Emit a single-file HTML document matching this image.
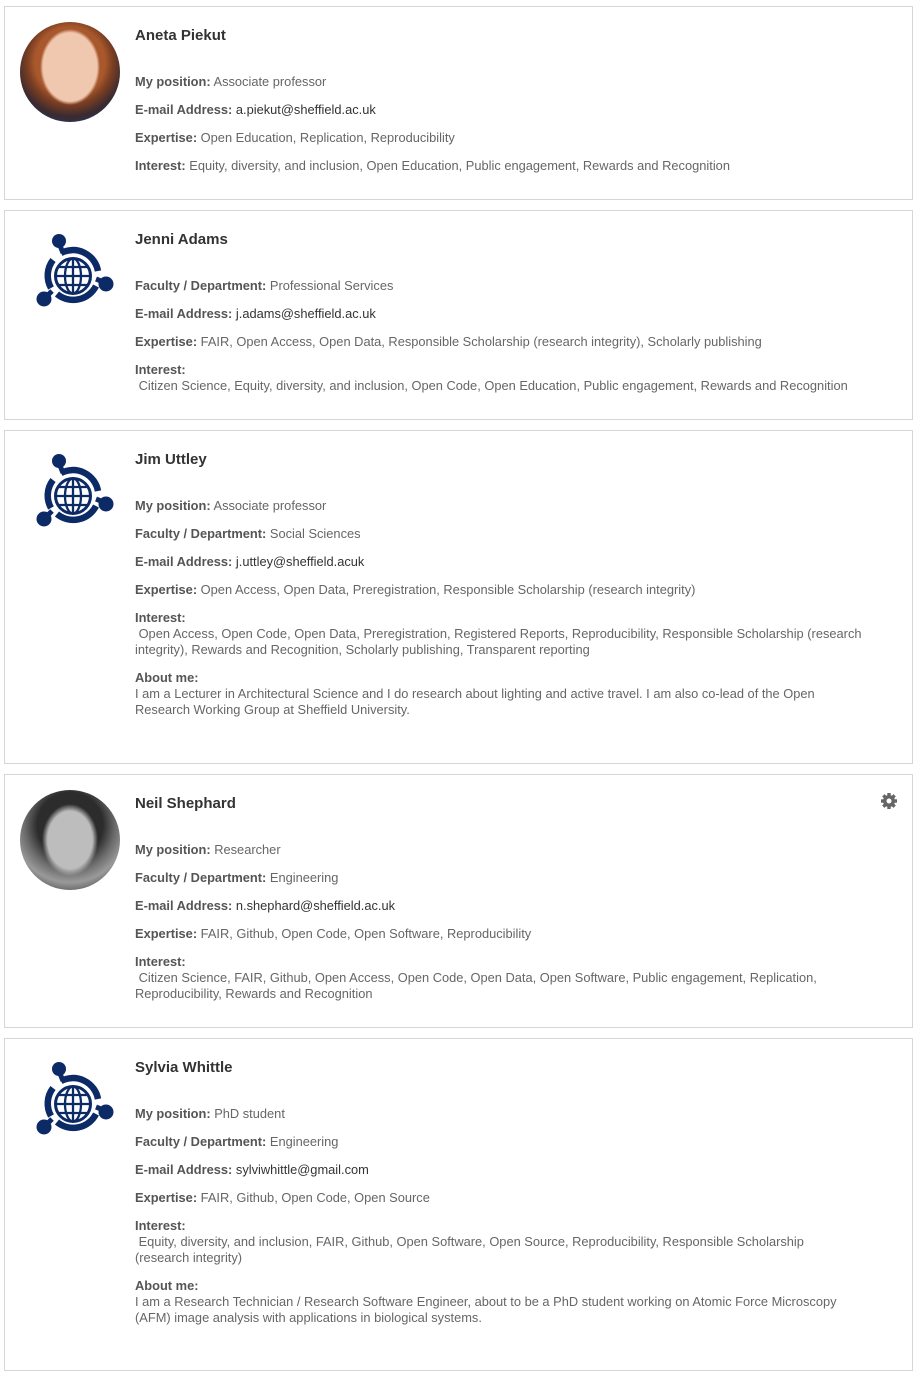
<!DOCTYPE html>
<html><head><meta charset="utf-8"><style>
body{margin:0;background:#fff;font-family:"Liberation Sans",sans-serif;font-size:12.85px;color:#666;}
.card{position:absolute;left:4px;width:909px;border:1px solid #d6d6d6;box-sizing:border-box;}
.in{position:absolute;left:130px;top:20px;width:745px;}
.name{font-size:15px;font-weight:bold;color:#333;line-height:18px;margin-bottom:29px;}
.f{line-height:16px;margin-bottom:12px;}
.f b{color:#555;}
.e{color:#333;}
.ab{margin-bottom:32px;}
.av{position:absolute;left:15px;top:15px;width:100px;height:100px;border-radius:50%;overflow:hidden;}
.logo{position:absolute;left:30px;top:20px;}
</style></head><body>
<svg width="0" height="0" style="position:absolute"><defs>
<g id="lg" fill="none" stroke="#0c2a66">
<path d="M26 22 A25.5 25.5 0 0 1 63 40" stroke-width="6.5"/>
<path d="M61 55 A25.5 25.5 0 0 1 22 63" stroke-width="6.5"/>
<path d="M16 57 A25.5 25.5 0 0 1 18 29" stroke-width="6.5"/>
<circle cx="38" cy="45" r="17.5" stroke-width="3"/>
<ellipse cx="38" cy="45" rx="8" ry="17.5" stroke-width="2.3"/>
<line x1="38" y1="28" x2="38" y2="62" stroke-width="2.3"/>
<line x1="21" y1="45" x2="55" y2="45" stroke-width="2.3"/>
<line x1="24" y1="36" x2="52" y2="36" stroke-width="2.3"/>
<line x1="24" y1="54" x2="52" y2="54" stroke-width="2.3"/>
<circle cx="24" cy="10" r="7" fill="#0c2a66" stroke="none"/>
<circle cx="71" cy="53" r="7.5" fill="#0c2a66" stroke="none"/>
<circle cx="9" cy="68" r="7.5" fill="#0c2a66" stroke="none"/>
<line x1="24" y1="12" x2="28" y2="22" stroke-width="5"/>
<line x1="66" y1="50" x2="61" y2="48" stroke-width="5"/>
<line x1="12" y1="65" x2="17" y2="60" stroke-width="5"/>
</g></defs></svg>

<div class="card" style="top:6px;height:194px;">
<div class="av" style="background:radial-gradient(ellipse 30% 38% at 50% 45%,#f0c8b0 0 90%,transparent 100%),radial-gradient(circle at 50% 40%,#a8582c 0 45%,#7a3e22 55%,#3a2a30 70%,#2a3550 80%);"></div>
<div class="in">
<div class="name">Aneta Piekut</div>
<div class="f"><b>My position:</b> Associate professor</div>
<div class="f"><b>E-mail Address:</b> <span class="e">a.piekut@sheffield.ac.uk</span></div>
<div class="f"><b>Expertise:</b> Open Education, Replication, Reproducibility</div>
<div class="f"><b>Interest:</b> Equity, diversity, and inclusion, Open Education, Public engagement, Rewards and Recognition</div>
</div></div>

<div class="card" style="top:210px;height:210px;">
<svg class="logo" width="80" height="80"><use href="#lg"/></svg>
<div class="in">
<div class="name">Jenni Adams</div>
<div class="f"><b>Faculty / Department:</b> Professional Services</div>
<div class="f"><b>E-mail Address:</b> <span class="e">j.adams@sheffield.ac.uk</span></div>
<div class="f"><b>Expertise:</b> FAIR, Open Access, Open Data, Responsible Scholarship (research integrity), Scholarly publishing</div>
<div class="f"><b>Interest:</b><br>&nbsp;Citizen Science, Equity, diversity, and inclusion, Open Code, Open Education, Public engagement, Rewards and Recognition</div>
</div></div>

<div class="card" style="top:430px;height:334px;">
<svg class="logo" width="80" height="80"><use href="#lg"/></svg>
<div class="in">
<div class="name">Jim Uttley</div>
<div class="f"><b>My position:</b> Associate professor</div>
<div class="f"><b>Faculty / Department:</b> Social Sciences</div>
<div class="f"><b>E-mail Address:</b> <span class="e">j.uttley@sheffield.acuk</span></div>
<div class="f"><b>Expertise:</b> Open Access, Open Data, Preregistration, Responsible Scholarship (research integrity)</div>
<div class="f"><b>Interest:</b><br>&nbsp;Open Access, Open Code, Open Data, Preregistration, Registered Reports, Reproducibility, Responsible Scholarship (research<br>integrity), Rewards and Recognition, Scholarly publishing, Transparent reporting</div>
<div class="f ab"><b>About me:</b><br>I am a Lecturer in Architectural Science and I do research about lighting and active travel. I am also co-lead of the Open<br>Research Working Group at Sheffield University.</div>
</div></div>

<div class="card" style="top:774px;height:254px;">
<div class="av" style="background:radial-gradient(ellipse 28% 36% at 50% 50%,#bdbdbd 0 80%,transparent 100%),radial-gradient(circle at 50% 35%,#2c2c2c 0 40%,#6a6a6a 55%,#9a9a9a 70%,#555 85%);"></div>
<svg style="position:absolute;left:875px;top:17px" width="18" height="18" viewBox="0 0 18 18"><g fill="#666"><circle cx="9" cy="9" r="6"/><rect x="7.3" y="1" width="3.4" height="16"/><rect x="1" y="7.3" width="16" height="3.4"/><rect x="7.3" y="1" width="3.4" height="16" transform="rotate(45 9 9)"/><rect x="7.3" y="1" width="3.4" height="16" transform="rotate(-45 9 9)"/></g><circle cx="9" cy="9" r="2.5" fill="#fff"/></svg>
<div class="in">
<div class="name">Neil Shephard</div>
<div class="f"><b>My position:</b> Researcher</div>
<div class="f"><b>Faculty / Department:</b> Engineering</div>
<div class="f"><b>E-mail Address:</b> <span class="e">n.shephard@sheffield.ac.uk</span></div>
<div class="f"><b>Expertise:</b> FAIR, Github, Open Code, Open Software, Reproducibility</div>
<div class="f"><b>Interest:</b><br>&nbsp;Citizen Science, FAIR, Github, Open Access, Open Code, Open Data, Open Software, Public engagement, Replication,<br>Reproducibility, Rewards and Recognition</div>
</div></div>

<div class="card" style="top:1038px;height:333px;">
<svg class="logo" width="80" height="80"><use href="#lg"/></svg>
<div class="in">
<div class="name">Sylvia Whittle</div>
<div class="f"><b>My position:</b> PhD student</div>
<div class="f"><b>Faculty / Department:</b> Engineering</div>
<div class="f"><b>E-mail Address:</b> <span class="e">sylviwhittle@gmail.com</span></div>
<div class="f"><b>Expertise:</b> FAIR, Github, Open Code, Open Source</div>
<div class="f"><b>Interest:</b><br>&nbsp;Equity, diversity, and inclusion, FAIR, Github, Open Software, Open Source, Reproducibility, Responsible Scholarship<br>(research integrity)</div>
<div class="f ab"><b>About me:</b><br>I am a Research Technician / Research Software Engineer, about to be a PhD student working on Atomic Force Microscopy<br>(AFM) image analysis with applications in biological systems.</div>
</div></div>
</body></html>
